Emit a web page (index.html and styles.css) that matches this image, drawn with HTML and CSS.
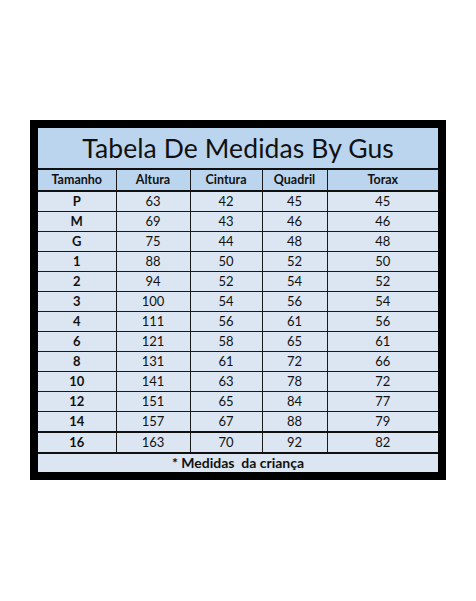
FILE: index.html
```html
<!DOCTYPE html>
<html lang="pt">
<head>
<meta charset="utf-8">
<title>Tabela De Medidas By Gus</title>
<link rel="stylesheet" href="styles.css">
</head>
<body>
<div class="frame">
  <table class="sizes">
    <colgroup>
      <col class="c1"><col class="c2"><col class="c3"><col class="c4"><col class="c5">
    </colgroup>
    <tr class="title-row"><td colspan="5" class="title">Tabela De Medidas By Gus</td></tr>
    <tr class="head"><td>Tamanho</td><td>Altura</td><td>Cintura</td><td>Quadril</td><td>Torax</td></tr>
    <tr><td class="sz">P</td><td>63</td><td>42</td><td>45</td><td>45</td></tr>
    <tr><td class="sz">M</td><td>69</td><td>43</td><td>46</td><td>46</td></tr>
    <tr><td class="sz">G</td><td>75</td><td>44</td><td>48</td><td>48</td></tr>
    <tr><td class="sz">1</td><td>88</td><td>50</td><td>52</td><td>50</td></tr>
    <tr><td class="sz">2</td><td>94</td><td>52</td><td>54</td><td>52</td></tr>
    <tr><td class="sz">3</td><td>100</td><td>54</td><td>56</td><td>54</td></tr>
    <tr><td class="sz">4</td><td>111</td><td>56</td><td>61</td><td>56</td></tr>
    <tr><td class="sz">6</td><td>121</td><td>58</td><td>65</td><td>61</td></tr>
    <tr><td class="sz">8</td><td>131</td><td>61</td><td>72</td><td>66</td></tr>
    <tr><td class="sz">10</td><td>141</td><td>63</td><td>78</td><td>72</td></tr>
    <tr><td class="sz">12</td><td>151</td><td>65</td><td>84</td><td>77</td></tr>
    <tr class="thick"><td class="sz">14</td><td>157</td><td>67</td><td>88</td><td>79</td></tr>
    <tr class="thick last"><td class="sz">16</td><td>163</td><td>70</td><td>92</td><td>82</td></tr>
    <tr class="foot"><td colspan="5">* Medidas&nbsp; da criança</td></tr>
  </table>
</div>
</body>
</html>
```

FILE: styles.css
```css
html, body {
  margin: 0;
  padding: 0;
  background: #ffffff;
}

.frame {
  width: 400px;
  margin: 120px 0 0 30px;
  border: 8px solid #000;
  background: #dce6f2;
}

.sizes {
  width: 400px;
  border-collapse: collapse;
  table-layout: fixed;
  font-family: "Lato", "Liberation Sans", sans-serif;
  color: #111;
}

.c1 { width: 78px; }
.c2 { width: 74px; }
.c3 { width: 72px; }
.c4 { width: 65px; }
.c5 { width: 111px; }

.sizes td {
  padding: 0;
  height: 19px;
  text-align: center;
  font-size: 13px;
  line-height: 19px;
  background: #dce6f2;
  border: 1px solid #1a1a1a;
}

.sizes tr td:first-child { border-left: none; }
.sizes tr td:last-child { border-right: none; }

.sizes .title-row td {
  height: 40px;
  line-height: 40px;
  font-size: 26.5px;
  font-weight: 400;
  background: #bcd5ee;
  border-top: none;
  border-bottom: 2px solid #111;
  letter-spacing: 0.1px;
}

.sizes .head td {
  height: 20px;
  line-height: 20px;
  font-weight: 700;
  font-size: 12.5px;
  background: #bcd5ee;
  border-bottom: 2px solid #111;
}

.sizes td.sz {
  font-weight: 700;
}

.sizes .thick td {
  border-bottom: 2px solid #111;
}

.sizes .foot td {
  height: 18px;
  line-height: 18px;
  font-weight: 700;
  font-size: 14px;
  border-bottom: none;
}
```
